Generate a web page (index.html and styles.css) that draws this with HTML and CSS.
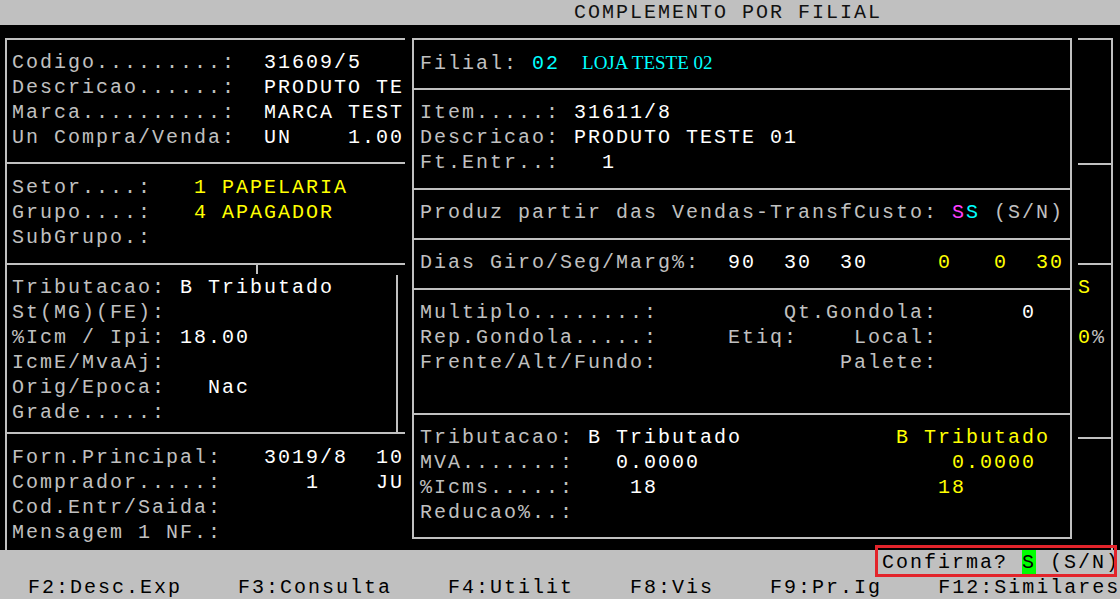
FILE: index.html
```html
<html>
<head>
  <meta charset="utf-8">
  <link rel="stylesheet" href="styles.css">
</head>
<body>
  <div class="titlebar">COMPLEMENTO POR FILIAL</div>

  <div class="main">

    <div class="left">
      <div class="lsec sa">
        <div class="ln">Codigo.........:  <span class="w">31609/5</span></div>
        <div class="ln">Descricao......:  <span class="w">PRODUTO TE</span></div>
        <div class="ln">Marca..........:  <span class="w">MARCA TEST</span></div>
        <div class="ln">Un Compra/Venda:  <span class="w">UN    1.00</span></div>
      </div>
      <div class="lsec sb">
        <div class="ln">Setor....:   <span class="y">1 PAPELARIA</span></div>
        <div class="ln">Grupo....:   <span class="y">4 APAGADOR</span></div>
        <div class="ln">SubGrupo.:</div>
      </div>
      <div class="lsec sc">
        <div class="ln">Tributacao: <span class="w">B Tributado</span></div>
        <div class="ln">St(MG)(FE):</div>
        <div class="ln">%Icm / Ipi: <span class="w">18.00</span></div>
        <div class="ln">IcmE/MvaAj:</div>
        <div class="ln">Orig/Epoca:   <span class="w">Nac</span></div>
        <div class="ln">Grade.....:</div>
      </div>
      <div class="lsec sd">
        <div class="ln">Forn.Principal:   <span class="w">3019/8  10</span></div>
        <div class="ln">Comprador.....:      <span class="w">1    JU</span></div>
        <div class="ln">Cod.Entr/Saida:</div>
        <div class="ln">Mensagem 1 NF.:</div>
      </div>
    </div>

    <div class="right">
      <div class="rsec">
        <div class="ln">Filial: <span class="c">02</span><span class="loja">LOJA TESTE 02</span></div>
      </div>
      <div class="rsec">
        <div class="ln">Item.....: <span class="w">31611/8</span></div>
        <div class="ln">Descricao: <span class="w">PRODUTO TESTE 01</span></div>
        <div class="ln">Ft.Entr..:   <span class="w">1</span></div>
      </div>
      <div class="rsec">
        <div class="ln">Produz partir das Vendas-TransfCusto: <span class="m">S</span><span class="c">S</span> (S/N)</div>
      </div>
      <div class="rsec">
        <div class="ln">Dias Giro/Seg/Marg%:<span class="w">  90  30  30</span><span class="y">     0   0  30</span></div>
      </div>
      <div class="rsec multi">
        <div class="ln">Multiplo........:         Qt.Gondola:      <span class="w">0</span></div>
        <div class="ln">Rep.Gondola.....:     Etiq:    Local:</div>
        <div class="ln">Frente/Alt/Fundo:             Palete:</div>
      </div>
      <div class="rsec last">
        <div class="ln">Tributacao: <span class="w">B Tributado</span>           <span class="y">B Tributado</span></div>
        <div class="ln">MVA.......:   <span class="w">0.0000</span>                  <span class="y">0.0000</span></div>
        <div class="ln">%Icms.....:    <span class="w">18</span>                    <span class="y">18</span></div>
        <div class="ln">Reducao%..:</div>
      </div>
    </div>

    <div class="far">
      <div class="fsec f1"></div>
      <div class="fsec f2"></div>
      <div class="fsec f3">
        <div class="ln"><span class="y">S</span></div>
        <div class="ln"></div>
        <div class="ln"><span class="y">0</span>%</div>
      </div>
      <div class="fsec f4"></div>
    </div>

  </div>

  <div class="status">
    <div class="confirm-row">
      <span class="confirm">Confirma? <span class="hl">S</span> (S/N)</span>
    </div>
    <div class="ln keys">  F2:Desc.Exp    F3:Consulta    F4:Utilit    F8:Vis    F9:Pr.Ig    F12:Similares</div>
  </div>
</body>
</html>
```

FILE: styles.css
```css
* {
	box-sizing: border-box;
}

body {
	margin: 0;
	width: 1120px;
	height: 599px;
	overflow: hidden;
	background: #000;
	color: #c0c0c0;
	font-family: "Liberation Mono", "DejaVu Sans Mono", monospace;
	font-size: 20px;
	letter-spacing: 2px;
	line-height: 25px;
}

.ln {
	height: 25px;
	white-space: pre;
}

.w { color: #ffffff; }
.y { color: #ffff00; }
.c { color: #00ffff; }
.m { color: #ff40ff; }

.titlebar {
	height: 25px;
	padding-left: 574px;
	background: #c0c0c0;
	color: #111;
	white-space: pre;
}

.main {
	display: flex;
	height: 525px;
}

/* left window */
.left {
	width: 400px;
	margin: 13px 0 0 5px;
	border-left: 2px solid #c0c0c0;
	border-top: 2px solid #c0c0c0;
}

.lsec {
	padding-left: 5px;
	border-bottom: 2px solid #c0c0c0;
}

.sa { padding-top: 10px; padding-bottom: 12px; }
.sb { padding-top: 11px; padding-bottom: 13px; }
.sc { padding-top: 10px; padding-bottom: 7px; position: relative; }
.sd { padding-top: 11px; padding-bottom: 5px; border-bottom: none; }

.sc::before {
	content: "";
	position: absolute;
	left: 249px;
	top: 0;
	width: 2px;
	height: 9px;
	background: #c0c0c0;
}

.sc::after {
	content: "";
	position: absolute;
	left: 389px;
	top: 10px;
	bottom: 0;
	width: 2px;
	background: #c0c0c0;
}

/* filial window */
.right {
	width: 660px;
	height: 501px;
	margin: 13px 0 0 7px;
	border: 2px solid #c0c0c0;
}

.rsec {
	padding: 10px 0 13px 6px;
	border-bottom: 2px solid #c0c0c0;
}

.rsec.multi { padding-bottom: 38px; }
.rsec.last { padding-bottom: 12px; border-bottom: none; }

.loja {
	margin-left: 22px;
	font-family: "Liberation Serif", "Times New Roman", serif;
	font-size: 19px;
	letter-spacing: 0;
	color: #00ffff;
}

/* side column */
.far {
	display: flex;
	flex-direction: column;
	width: 35px;
	height: 512px;
	margin: 13px 0 0 6px;
	border-top: 2px solid #c0c0c0;
	border-right: 2px solid #c0c0c0;
}

.fsec { border-bottom: 2px solid #c0c0c0; }
.f1 { height: 125px; }
.f2 { height: 100px; }
.f3 { height: 174px; padding-top: 10px; }
.f4 { flex: 1; border-bottom: none; }

/* bottom bar */
.status {
	height: 50px;
	background: #c0c0c0;
	color: #000;
}

.confirm-row {
	display: flex;
	justify-content: flex-end;
	height: 25px;
}

.confirm {
	position: relative;
	white-space: pre;
}

.confirm::after {
	content: "";
	position: absolute;
	top: -5px;
	bottom: -2px;
	left: -7px;
	right: 3px;
	border: 3px solid #e3242b;
}

.hl {
	display: inline-block;
	background: #00ff00;
	color: #000;
}
```
